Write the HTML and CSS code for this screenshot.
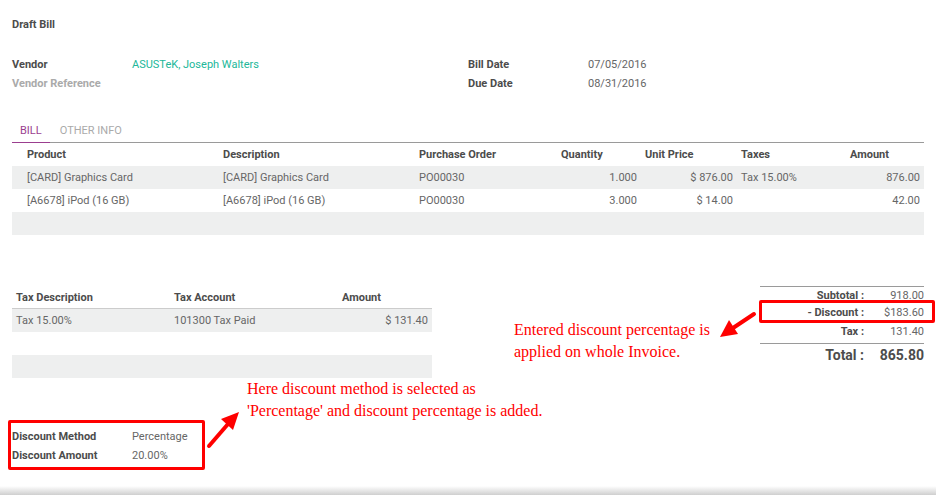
FILE: index.html
```html
<!DOCTYPE html>
<html>
<head>
<meta charset="utf-8">
<link rel="stylesheet" href="styles.css">
</head>
<body>
<div class="sheet">
  <div class="title">Draft Bill</div>

  <div class="fields">
    <div class="group">
      <div class="label">Vendor</div><div class="value link">ASUSTeK, Joseph Walters</div>
      <div class="label muted">Vendor Reference</div><div class="value"></div>
    </div>
    <div class="group">
      <div class="label">Bill Date</div><div class="value">07/05/2016</div>
      <div class="label">Due Date</div><div class="value">08/31/2016</div>
    </div>
  </div>

  <div class="tabs">
    <div class="tab active">BILL</div>
    <div class="tab">OTHER INFO</div>
  </div>

  <table class="lines">
    <colgroup>
      <col class="c1"><col class="c2"><col class="c3"><col class="c4"><col class="c5"><col class="c6"><col class="c7">
    </colgroup>
    <thead>
      <tr><th class="first">Product</th><th>Description</th><th>Purchase Order</th><th>Quantity</th><th>Unit Price</th><th>Taxes</th><th>Amount</th></tr>
    </thead>
    <tbody>
      <tr class="odd"><td class="first">[CARD] Graphics Card</td><td>[CARD] Graphics Card</td><td>PO00030</td><td class="num">1.000</td><td class="num">$ 876.00</td><td>Tax 15.00%</td><td class="num">876.00</td></tr>
      <tr><td class="first">[A6678] iPod (16 GB)</td><td>[A6678] iPod (16 GB)</td><td>PO00030</td><td class="num">3.000</td><td class="num">$ 14.00</td><td></td><td class="num">42.00</td></tr>
      <tr class="odd"><td class="first"></td><td></td><td></td><td></td><td></td><td></td><td></td></tr>
    </tbody>
  </table>

  <div class="bottom">
    <table class="taxes">
      <colgroup><col class="t1"><col class="t2"><col class="t3"></colgroup>
      <thead>
        <tr><th>Tax Description</th><th>Tax Account</th><th>Amount</th></tr>
      </thead>
      <tbody>
        <tr class="odd"><td>Tax 15.00%</td><td>101300 Tax Paid</td><td class="num">$ 131.40</td></tr>
        <tr><td></td><td></td><td></td></tr>
        <tr class="odd"><td></td><td></td><td></td></tr>
      </tbody>
    </table>

    <div class="totals">
      <div class="trow first-row"><span class="tl">Subtotal :</span><span class="tv">918.00</span></div>
      <div class="trow"><span class="tl">- Discount :</span><span class="tv">$183.60</span></div>
      <div class="trow"><span class="tl">Tax :</span><span class="tv">131.40</span></div>
      <div class="trow grand"><span class="tl">Total :</span><span class="tv">865.80</span></div>
    </div>
  </div>

  <div class="discount">
    <div class="label">Discount Method</div><div class="value">Percentage</div>
    <div class="label">Discount Amount</div><div class="value">20.00%</div>
  </div>
</div>

<div class="box box-total"></div>
<div class="box box-disc"></div>

<div class="note note-total">Entered discount percentage is<br>applied on whole Invoice.</div>
<div class="note note-disc">Here discount method is selected as<br>'Percentage' and discount percentage is added.</div>

<svg class="arrows" width="936" height="495" viewBox="0 0 936 495">
  <line x1="209" y1="446" x2="228" y2="424" stroke="#ff0000" stroke-width="4" stroke-linecap="round"/>
  <polygon points="239,412 221,419 233,430" fill="#ff0000"/>
  <line x1="754" y1="314" x2="733" y2="328" stroke="#ff0000" stroke-width="4" stroke-linecap="round"/>
  <polygon points="720,337 729,320 738,334" fill="#ff0000"/>
</svg>

<div class="shade"></div>
</body>
</html>
```

FILE: styles.css
```css
html, body {
  margin: 0;
  padding: 0;
  background: #ffffff;
}
body {
  width: 936px;
  height: 495px;
  position: relative;
  overflow: hidden;
  font-family: Roboto, "Noto Sans", sans-serif;
  font-size: 11px;
  color: #666666;
}
.sheet {
  padding: 0 12px;
}
.title {
  padding-top: 17px;
  line-height: 16px;
  font-weight: bold;
  color: #4c4c4c;
}
.fields {
  margin-top: 22px;
  display: grid;
  grid-template-columns: 456px 456px;
}
.group {
  display: grid;
  grid-template-columns: 120px 1fr;
  grid-auto-rows: 19px;
  align-items: center;
}
.label {
  font-weight: bold;
  color: #4c4c4c;
}
.label.muted {
  color: #aaaaaa;
}
.link {
  color: #21b799;
}
.tabs {
  margin-top: 26px;
  display: flex;
  border-bottom: 1px solid #9a9a9a;
}
.tab {
  padding: 4px 8px 3px;
  line-height: 16px;
  color: #aaaaaa;
  margin-right: 2px;
}
.tab.active {
  color: #9b3e8f;
  border-bottom: 1px solid #9b3e8f;
  margin-bottom: -1px;
}
table {
  border-collapse: collapse;
  table-layout: fixed;
}
.lines {
  width: 912px;
}
.c1 { width: 207px; }
.c2 { width: 196px; }
.c3 { width: 142px; }
.c4 { width: 84px; }
.c5 { width: 96px; }
.c6 { width: 109px; }
.c7 { width: 78px; }
th, td {
  height: 23px;
  padding: 0 4px;
  text-align: left;
  white-space: nowrap;
}
th {
  font-weight: bold;
  color: #4c4c4c;
}
th.first, td.first {
  padding-left: 15px;
}
td.num {
  text-align: right;
}
tr.odd td {
  background: #eeefef;
}
.bottom {
  margin-top: 51px;
  display: flex;
  justify-content: space-between;
  align-items: flex-start;
}
.taxes {
  width: 420px;
}
.t1 { width: 158px; }
.t2 { width: 168px; }
.t3 { width: 94px; }
.taxes thead th {
  border-bottom: 1px solid #cccccc;
  height: 22px;
}
.totals {
  width: 164px;
  border-top: 1px solid #9a9a9a;
}
.trow {
  display: flex;
  height: 19px;
  align-items: center;
}
.trow.first-row {
  height: 16px;
}
.tl {
  width: 104px;
  text-align: right;
  font-weight: bold;
  color: #4c4c4c;
  padding-right: 4px;
}
.tv {
  flex: 1;
  text-align: right;
}
.trow.grand {
  margin-top: 2px;
  border-top: 1px solid #9a9a9a;
  height: 21px;
  font-size: 14px;
  font-weight: bold;
  color: #4c4c4c;
}
.trow.grand .tv {
  font-weight: bold;
}
.discount {
  margin-top: 49px;
  display: grid;
  grid-template-columns: 120px 1fr;
  grid-auto-rows: 19px;
  align-items: center;
  width: 300px;
}
.box {
  position: absolute;
  border: 3px solid #ff0000;
  border-radius: 2px;
  box-sizing: border-box;
}
.box-total {
  left: 759px;
  top: 300px;
  width: 176px;
  height: 23px;
}
.box-disc {
  left: 8px;
  top: 420px;
  width: 197px;
  height: 50px;
}
.note {
  position: absolute;
  font-family: "Liberation Serif", "Times New Roman", serif;
  font-size: 16px;
  line-height: 22px;
  color: #ff0000;
  white-space: nowrap;
}
.note-total {
  left: 514px;
  top: 319px;
}
.note-disc {
  left: 247px;
  top: 378px;
}
.arrows {
  position: absolute;
  left: 0;
  top: 0;
  pointer-events: none;
}
.shade {
  position: absolute;
  left: 0;
  right: 0;
  bottom: 0;
  height: 9px;
  background: linear-gradient(#ffffff, #cfcfcf);
}
```
